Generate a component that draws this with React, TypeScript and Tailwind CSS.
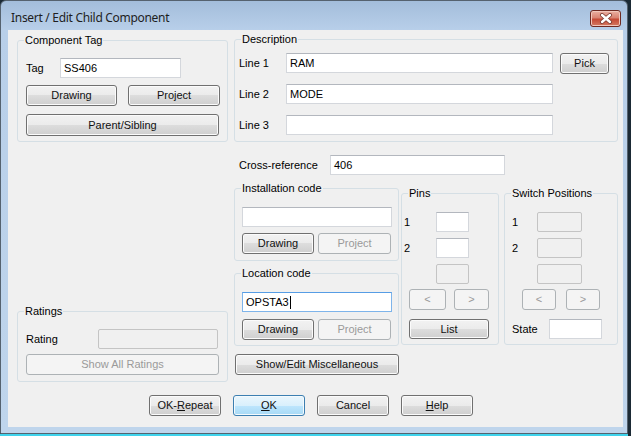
import React from 'react';

const btnBase = 'flex items-center justify-center rounded-[3px] border text-[11px] leading-none';
const btnNormal =
    'border-[#707070] bg-[linear-gradient(#f2f2f2_0%,#ebebeb_50%,#dddddd_50%,#cfcfcf_100%)] shadow-[inset_0_0_0_1px_#fbfbfb] text-[#111]';
const btnFocused =
    'border-[#3c7fb1] bg-[linear-gradient(#eaf6fd_0%,#d9f0fc_50%,#bee6fd_50%,#a7d9f5_100%)] shadow-[inset_0_0_0_1px_#f4fafd] text-[#111]';
const btnDisabled = 'border-[#adb2b5] bg-[#f4f4f4] text-[#9a9a9a]';

function Btn({
    children,
    className = '',
    disabled,
    focused,
}: {
    children: React.ReactNode;
    className?: string;
    disabled?: boolean;
    focused?: boolean;
}) {
    const look = disabled ? btnDisabled : focused ? btnFocused : btnNormal;
    return <div className={`${btnBase} ${look} ${className}`}>{children}</div>;
}

function Field({
    children,
    className = '',
    disabled,
    focused,
}: {
    children?: React.ReactNode;
    className?: string;
    disabled?: boolean;
    focused?: boolean;
}) {
    const look = disabled
        ? 'bg-[#f0f0f0] border-[#c4c4c4] rounded-[2px]'
        : focused
          ? 'bg-white border-[#7eb4ea] border-t-[#569de5]'
          : 'bg-white border-[#d4d7dc] border-t-[#b3b7be]';
    return <div className={`flex items-center border px-[3px] text-[11px] ${look} ${className}`}>{children}</div>;
}

// group box: the fieldset keeps no padding so the legend sits 7px in from the border
function Group({
    title,
    className = '',
    inner = '',
    children,
}: {
    title: string;
    className?: string;
    inner?: string;
    children?: React.ReactNode;
}) {
    return (
        <fieldset className={`rounded-[3px] border border-[#d5dfe5] ${className}`}>
            <legend className="ml-[6px] px-[1px] text-[11px] leading-[14px]">{title}</legend>
            <div className={inner}>{children}</div>
        </fieldset>
    );
}

function CloseIcon() {
    return (
        <svg width="14" height="11" viewBox="0 0 14 11">
            <path d="M3 2 L11 9 M11 2 L3 9" stroke="#7a3a30" strokeWidth="4" strokeLinecap="round" />
            <path d="M3 2 L11 9 M11 2 L3 9" stroke="#ffffff" strokeWidth="2.4" strokeLinecap="round" />
        </svg>
    );
}

export default function App() {
    return (
        <div className="w-[631px] h-[436px] bg-[#1b2a35] overflow-hidden font-['Liberation_Sans',Arial,sans-serif] text-black">
            <div className="w-[628px] h-[434px] flex flex-col rounded-t-[6px] border border-[#55626f] bg-[linear-gradient(#a3bddb_0px,#b8cfe9_29px,#bfd5ec_100%)]">
                {/* title bar */}
                <div className="h-[29px] flex items-center pt-[4px] pl-[10px] pr-[6px]">
                    <span className="flex-1 text-[12px] tracking-[-0.3px] font-['Noto_Sans',sans-serif] text-[#1e1e1e]">
                        Insert / Edit Child Component
                    </span>
                    <div className="w-[31px] h-[17px] mt-[1px] flex items-center justify-center rounded-[3px] border border-[#6e2a22] bg-[linear-gradient(#eab0a2_0%,#d98372_45%,#c54a36_55%,#d47a62_100%)] shadow-[inset_0_0_0_1px_#f1c6bb]">
                        <CloseIcon />
                    </div>
                </div>

                {/* client area */}
                <div className="ml-[7px] w-[615px] h-[397px] bg-[#f0f0f0] flex flex-col">
                    <div className="flex items-start">
                        {/* left column */}
                        <div className="ml-[9px] w-[211px] flex flex-col">
                            <Group title="Component Tag" className="mt-[3px] h-[109px]" inner="pl-[8px]">
                                <div className="mt-[11px] flex items-center h-[20px] text-[11px]">
                                    <span className="w-[34px]">Tag</span>
                                    <Field className="w-[121px] h-[20px]">SS406</Field>
                                </div>
                                <div className="mt-[7px] flex gap-[11px]">
                                    <Btn className="w-[91px] h-[21px]">Drawing</Btn>
                                    <Btn className="w-[92px] h-[21px]">Project</Btn>
                                </div>
                                <Btn className="mt-[8px] w-[193px] h-[22px]">Parent/Sibling</Btn>
                            </Group>

                            <Group title="Ratings" className="mt-[162px] h-[78px]" inner="pl-[8px]">
                                <div className="mt-[11px] flex items-center h-[20px] text-[11px]">
                                    <span className="w-[72px]">Rating</span>
                                    <Field disabled className="w-[120px] h-[20px]" />
                                </div>
                                <Btn disabled className="mt-[5px] w-[193px] h-[21px]">
                                    Show All Ratings
                                </Btn>
                            </Group>
                        </div>

                        {/* right column */}
                        <div className="ml-[6px] w-[384px] flex flex-col">
                            <Group title="Description" className="mt-[2px] h-[110px]" inner="pl-[4px]">
                                <div className="mt-[6px] flex items-center h-[22px] text-[11px]">
                                    <span className="w-[47px]">Line 1</span>
                                    <Field className="w-[267px] h-[20px]">RAM</Field>
                                    <Btn className="ml-[7px] w-[49px] h-[21px]">Pick</Btn>
                                </div>
                                <div className="mt-[10px] flex items-center h-[20px] text-[11px]">
                                    <span className="w-[47px]">Line 2</span>
                                    <Field className="w-[267px] h-[20px]">MODE</Field>
                                </div>
                                <div className="mt-[11px] flex items-center h-[20px] text-[11px]">
                                    <span className="w-[47px]">Line 3</span>
                                    <Field className="w-[267px] h-[20px]" />
                                </div>
                            </Group>

                            <div className="mt-[13px] pl-[5px] flex items-center h-[20px] text-[11px]">
                                <span className="w-[91px]">Cross-reference</span>
                                <Field className="w-[175px] h-[20px]">406</Field>
                            </div>

                            <div className="mt-[6px] flex items-start">
                                <div className="w-[165px] flex flex-col">
                                    <Group title="Installation code" className="h-[80px]" inner="pl-[7px]">
                                        <Field className="mt-[12px] w-[150px] h-[20px]" />
                                        <div className="mt-[6px] flex gap-[4px]">
                                            <Btn className="w-[72px] h-[21px]">Drawing</Btn>
                                            <Btn disabled className="w-[73px] h-[21px]">
                                                Project
                                            </Btn>
                                        </div>
                                    </Group>
                                    <Group title="Location code" className="mt-[5px] h-[80px]" inner="pl-[7px]">
                                        <Field focused className="mt-[12px] w-[150px] h-[20px]">
                                            OPSTA3
                                            <span className="ml-[1px] w-[1px] h-[13px] bg-black" />
                                        </Field>
                                        <div className="mt-[7px] flex gap-[4px]">
                                            <Btn className="w-[72px] h-[21px]">Drawing</Btn>
                                            <Btn disabled className="w-[73px] h-[21px]">
                                                Project
                                            </Btn>
                                        </div>
                                    </Group>
                                    <Btn className="mt-[8px] ml-[1px] w-[164px] h-[21px]">Show/Edit Miscellaneous</Btn>
                                </div>

                                <Group title="Pins" className="ml-[2px] mt-[5px] w-[98px] h-[159px]" inner="pl-[2px]">
                                    <div className="mt-[12px] flex items-center h-[20px] text-[11px]">
                                        <span className="w-[32px]">1</span>
                                        <Field className="w-[33px] h-[20px]" />
                                    </div>
                                    <div className="mt-[6px] flex items-center h-[20px] text-[11px]">
                                        <span className="w-[32px]">2</span>
                                        <Field className="w-[33px] h-[20px]" />
                                    </div>
                                    <Field disabled className="mt-[6px] ml-[32px] w-[33px] h-[20px]" />
                                    <div className="mt-[5px] ml-[5px] flex gap-[8px]">
                                        <Btn disabled className="w-[37px] h-[21px]">
                                            &lt;
                                        </Btn>
                                        <Btn disabled className="w-[35px] h-[21px]">
                                            &gt;
                                        </Btn>
                                    </div>
                                    <Btn className="mt-[9px] ml-[5px] w-[80px] h-[20px]">List</Btn>
                                </Group>

                                <Group
                                    title="Switch Positions"
                                    className="ml-[5px] mt-[5px] w-[114px] h-[159px]"
                                    inner="pl-[7px]"
                                >
                                    <div className="mt-[12px] flex items-center h-[20px] text-[11px]">
                                        <span className="w-[25px]">1</span>
                                        <Field disabled className="w-[45px] h-[20px]" />
                                    </div>
                                    <div className="mt-[6px] flex items-center h-[20px] text-[11px]">
                                        <span className="w-[25px]">2</span>
                                        <Field disabled className="w-[45px] h-[20px]" />
                                    </div>
                                    <Field disabled className="mt-[6px] ml-[25px] w-[45px] h-[20px]" />
                                    <div className="mt-[5px] ml-[10px] flex gap-[10px]">
                                        <Btn disabled className="w-[34px] h-[21px]">
                                            &lt;
                                        </Btn>
                                        <Btn disabled className="w-[34px] h-[21px]">
                                            &gt;
                                        </Btn>
                                    </div>
                                    <div className="mt-[9px] flex items-center h-[20px] text-[11px]">
                                        <span className="w-[37px]">State</span>
                                        <Field className="w-[53px] h-[20px]" />
                                    </div>
                                </Group>
                            </div>
                        </div>
                    </div>

                    {/* dialog buttons */}
                    <div className="mt-[13px] pl-[141px] flex gap-[12px]">
                        <Btn className="w-[72px] h-[21px]">
                            OK-<span className="underline">R</span>epeat
                        </Btn>
                        <Btn focused className="w-[72px] h-[21px]">
                            <span className="underline">O</span>K
                        </Btn>
                        <Btn className="w-[72px] h-[21px]">Cancel</Btn>
                        <Btn className="w-[72px] h-[21px]">
                            <span className="underline">H</span>elp
                        </Btn>
                    </div>
                </div>
            </div>
            <div className="w-[628px] h-[2px] bg-[#3fd3ec]" />
        </div>
    );
}
